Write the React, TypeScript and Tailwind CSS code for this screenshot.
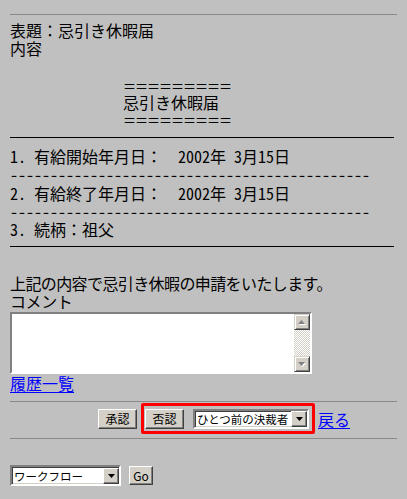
const font = "font-['Noto_Sans_CJK_JP',sans-serif]";

const raised =
  "bg-[#d4d0c8] border border-t-white border-l-white border-r-[#404040] border-b-[#404040] shadow-[inset_-1px_-1px_0_#808080]";
const sunken =
  "border-2 border-t-[#808080] border-l-[#808080] border-r-white border-b-white shadow-[inset_1px_1px_0_#404040,inset_-1px_-1px_0_#d4d0c8]";

const dashes = "-".repeat(45);

// half-width latin, like the fixed-pitch gothic in the original
function H({ children }: { children: string }) {
  return <span className="[font-feature-settings:'hwid']">{children}</span>;
}

function Btn({ label, w }: { label: string; w: string }) {
  return (
    <button className={`${raised} ${w} flex items-center justify-center text-[12px] leading-none text-black`}>
      {label}
    </button>
  );
}

function DownArrow({ color = "#000" }: { color?: string }) {
  return (
    <svg width="7" height="4" viewBox="0 0 7 4">
      <path d="M0 0h7L3.5 4z" fill={color} />
    </svg>
  );
}

function FakeSelect({ label, w }: { label: string; w: string }) {
  return (
    <div className={`${sunken} ${w} bg-white flex items-center`}>
      <span className="flex-1 pl-[2px] text-[11.5px] leading-[14px] whitespace-nowrap">{label}</span>
      <span className={`${raised} w-[16px] h-[16px] shrink-0 flex items-center justify-center`}>
        <DownArrow />
      </span>
    </div>
  );
}

export default function App() {
  return (
    <div className={`min-h-screen bg-[#c0c0c0] text-black text-[16px] ${font}`}>
      <div className="px-[10px] pt-[14px]">
        <div className="h-px w-[387px] bg-[#8a8a8a]" />

        <div className="mt-[6px] leading-[18px]">
          <div>表題：忌引き休暇届</div>
          <div>内容</div>
          <div className="h-[18px]" />
          <div className="pl-[113px] text-[13px] tracking-[-1px] leading-[18px] pt-[2px] h-[18px]">＝＝＝＝＝＝＝＝＝</div>
          <div className="pl-[113px]">忌引き休暇届</div>
          <div className="pl-[113px] text-[13px] tracking-[-1px] leading-[18px] h-[18px]">＝＝＝＝＝＝＝＝＝</div>
        </div>

        <div className="mt-[8px] h-px w-[384px] bg-black" />

        <div className="mt-[9px] leading-[18.3px] whitespace-pre">
          <div>
            <H>1. </H>有給開始年月日：<H>  2002</H>年<H> 3</H>月<H>15</H>日
          </div>
          <div>
            <H>{dashes}</H>
          </div>
          <div>
            <H>2. </H>有給終了年月日：<H>  2002</H>年<H> 3</H>月<H>15</H>日
          </div>
          <div>
            <H>{dashes}</H>
          </div>
          <div>
            <H>3. </H>続柄：祖父
          </div>
        </div>

        <div className="mt-[8px] h-px w-[384px] bg-black" />

        <div className="mt-[27px] leading-[18px]">
          <div className="tracking-[-0.6px]">上記の内容で忌引き休暇の申請をいたします。</div>
          <div className="tracking-[-0.4px]">コメント</div>
        </div>

        <div className={`mt-[2px] ${sunken} w-[302px] h-[62px] bg-white flex`}>
          <textarea className="flex-1 resize-none outline-none bg-white" />
          <div className="w-[16px] flex flex-col bg-[repeating-conic-gradient(#d4d0c8_0_25%,#ffffff_0_50%)] bg-[length:2px_2px]">
            <div className="w-[16px] h-[16px] bg-[#d4d0c8] border border-t-[#d4d0c8] border-l-[#d4d0c8] border-r-[#404040] border-b-[#404040] shadow-[inset_1px_1px_0_#fff,inset_-1px_-1px_0_#808080] flex items-center justify-center">
              <svg width="8" height="5" viewBox="0 0 8 5">
                <path d="M1 5h7L4.5 1z" fill="#fff" />
                <path d="M0 4h7L3.5 0z" fill="#808080" />
              </svg>
            </div>
            <div className="flex-1" />
            <div className="w-[16px] h-[16px] bg-[#d4d0c8] border border-t-[#d4d0c8] border-l-[#d4d0c8] border-r-[#404040] border-b-[#404040] shadow-[inset_1px_1px_0_#fff,inset_-1px_-1px_0_#808080] flex items-center justify-center">
              <svg width="8" height="5" viewBox="0 0 8 5">
                <path d="M1 1h7L4.5 5z" fill="#fff" />
                <path d="M0 0h7L3.5 4z" fill="#808080" />
              </svg>
            </div>
          </div>
        </div>

        <div className="leading-[18px]">
          <a href="#" className="text-[#0000ff] underline underline-offset-[2px]">履歴一覧</a>
        </div>

        <div className="mt-[9px] h-px w-[387px] bg-[#8a8a8a]" />

        <div className="mt-px pl-[88px] flex items-center h-[31px]">
          <Btn label="承認" w="w-[39px] h-[20px]" />
          <div className="ml-[4px] h-[31px] border-[3px] border-[#ff0000] rounded-[2px] flex items-center pl-px pr-[3px]">
            <Btn label="否認" w="w-[39px] h-[20px]" />
            <div className="ml-[9px]">
              <FakeSelect label="ひとつ前の決裁者" w="w-[116px] h-[20px]" />
            </div>
          </div>
          <a href="#" className="ml-[3px] text-[#0000ff] underline underline-offset-[2px] leading-[18px]">戻る</a>
        </div>

        <div className="mt-[4px] h-px w-[387px] bg-[#8a8a8a]" />

        <div className="mt-[26px] flex items-center gap-[8px]">
          <FakeSelect label="ワークフロー" w="w-[111px] h-[21px]" />
          <Btn label="Go" w="w-[24px] h-[19px]" />
        </div>
      </div>
    </div>
  );
}
